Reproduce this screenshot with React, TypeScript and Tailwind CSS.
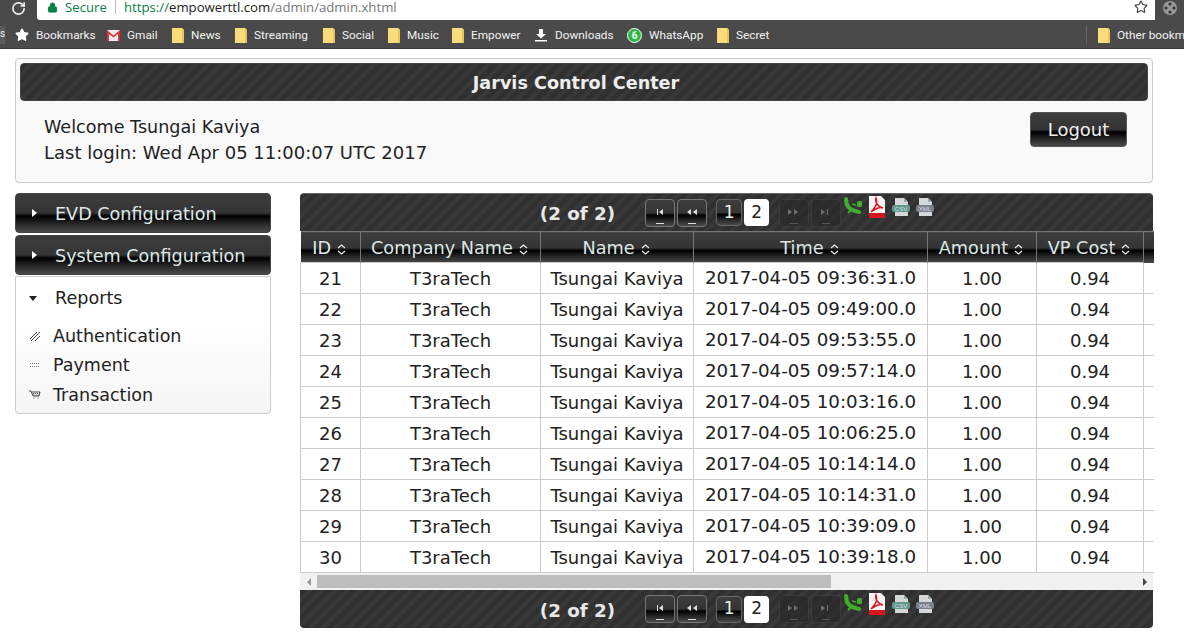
import { RotateCw, Lock, Star } from 'lucide-react';
import type { ReactNode } from 'react';

const STRIPES =
  'bg-[repeating-linear-gradient(135deg,#303030_0px,#303030_5px,#383838_5px,#383838_9px)]';
const GLOSS =
  'bg-[linear-gradient(#3d3d3d_0%,#343434_50%,#000000_58%,#262626_78%,#4a4a4a_100%)]';

const rows = [
  ['21', '2017-04-05 09:36:31.0'],
  ['22', '2017-04-05 09:49:00.0'],
  ['23', '2017-04-05 09:53:55.0'],
  ['24', '2017-04-05 09:57:14.0'],
  ['25', '2017-04-05 10:03:16.0'],
  ['26', '2017-04-05 10:06:25.0'],
  ['27', '2017-04-05 10:14:14.0'],
  ['28', '2017-04-05 10:14:31.0'],
  ['29', '2017-04-05 10:39:09.0'],
  ['30', '2017-04-05 10:39:18.0'],
];

const columns = ['ID', 'Company Name', 'Name', 'Time', 'Amount', 'VP Cost'];

function Folder() {
  return (
    <svg width="12" height="15" viewBox="0 0 12 15" className="shrink-0">
      <path d="M0 0h10l2 2v13H0z" fill="#fbdc7a" />
      <path d="M10 0l2 2v13h-2z" fill="#e8c25a" />
    </svg>
  );
}

function Mark({ icon, label, className }: { icon: ReactNode; label: string; className: string }) {
  return (
    <div className={`flex items-center gap-[7px] shrink-0 ${className}`}>
      {icon}
      <span>{label}</span>
    </div>
  );
}

function BrowserChrome() {
  return (
    <div className="font-['Open_Sans',sans-serif]">
      <div className="h-[20px] bg-[#4a4a4a] flex overflow-hidden">
        <div className="w-[37px] flex justify-center">
          <RotateCw size={15} color="#f0f0f0" strokeWidth={2.6} className="mt-[1px]" />
        </div>
        <div className="w-[1118px] h-[20px] bg-white rounded-bl-[3px] flex items-center text-[13.2px] leading-[14px] pl-[10px] pb-[6px] relative">
          <Lock size={11} color="#0b8043" fill="#0b8043" className="mr-[7px]" />
          <span className="text-[#0b8043] w-[50px]">Secure</span>
          <span className="w-px h-[14px] bg-[#bbb] mr-[8px]" />
          <span className="text-[#0b8043]">https://</span>
          <span className="text-[#222]">empowerttl.com</span>
          <span className="text-[#777]">/admin/admin.xhtml</span>
          <Star size={14} color="#444" className="absolute right-[7px] top-[0px]" />
        </div>
        <div className="flex-1 flex justify-center">
          <svg width="16" height="16" viewBox="0 0 16 16">
            <circle cx="8" cy="8" r="7" fill="#999" />
            <circle cx="8" cy="4" r="1.6" fill="#333" />
            <circle cx="4" cy="8" r="1.6" fill="#333" />
            <circle cx="12" cy="8" r="1.6" fill="#333" />
            <circle cx="8" cy="12" r="1.6" fill="#333" />
          </svg>
        </div>
      </div>
      <div className="h-[29px] bg-[#4a4a4a] border-b border-b-[#3a3a3a] flex items-center text-[11.8px] leading-[15px] text-[#f2f2f2] font-['Roboto',sans-serif] relative overflow-hidden pt-[2px]">
        <div className="w-[5px] h-[18px] bg-[#5a5a5a] shrink-0 mr-[10px] overflow-hidden text-[10px]">s</div>
        <Mark
          className="w-[92px]"
          icon={<Star size={14} color="#fff" fill="#fff" />}
          label="Bookmarks"
        />
        <Mark
          className="w-[65px]"
          icon={
            <svg width="13" height="11" viewBox="0 0 13 11">
              <rect width="13" height="11" fill="#eee" />
              <path d="M0 0l6.5 5.5L13 0v11h-2V4L6.5 7.5 2 4v7H0z" fill="#d33" />
            </svg>
          }
          label="Gmail"
        />
        <Mark className="w-[63px]" icon={<Folder />} label="News" />
        <Mark className="w-[88px]" icon={<Folder />} label="Streaming" />
        <Mark className="w-[65px]" icon={<Folder />} label="Social" />
        <Mark className="w-[64px]" icon={<Folder />} label="Music" />
        <Mark className="w-[82px]" icon={<Folder />} label="Empower" />
        <Mark
          className="w-[93px]"
          icon={
            <svg width="14" height="14" viewBox="0 0 14 14">
              <path d="M5 1h4v5h3L7 10.5 2 6h3zM1 12h12v1.5H1z" fill="#fff" />
            </svg>
          }
          label="Downloads"
        />
        <Mark
          className="w-[90px]"
          icon={
            <span className="w-[15px] h-[15px] rounded-full bg-[#2cb742] border border-white text-[10px] leading-[13px] text-center text-white font-bold">
              6
            </span>
          }
          label="WhatsApp"
        />
        <Mark className="w-[369px]" icon={<Folder />} label="Secret" />
        <span className="w-px h-[18px] bg-[#666] mr-[11px] shrink-0" />
        <Mark className="" icon={<Folder />} label="Other bookm" />
      </div>
    </div>
  );
}

function PagerButton({ kind, disabled }: { kind: 'first' | 'prev' | 'next' | 'last'; disabled?: boolean }) {
  const glyph = {
    first: 'M4 1v6h1V1zM10 1v6L6 4z',
    prev: 'M6 1v6L2 4zM12 1v6L8 4z',
    next: 'M1 1v6l4-3zM7 1v6l4-3z',
    last: 'M2 1v6l4-3zM8 1v6h1V1z',
  }[kind];
  return (
    <div
      className={`w-[30px] h-[28px] rounded-[4px] border flex flex-col items-center pt-[8px] ${
        disabled ? 'border-[#3f3f3f] bg-[#2a2a2a] opacity-70' : `border-[#777] ${GLOSS}`
      }`}
    >
      <svg width="14" height="8" viewBox="0 0 14 8">
        <path d={glyph} fill={disabled ? '#888' : '#ddd'} />
      </svg>
      <span className={`w-[8px] h-px mt-[7px] ${disabled ? 'bg-[#666]' : 'bg-[#ddd]'}`} />
    </div>
  );
}

function FileIcon({ label, tint }: { label: string; tint: string }) {
  return (
    <svg width="20" height="20" viewBox="0 0 20 20" className="shrink-0">
      <path d="M4 1h9l4 4v14H4z" fill="#d5d8d8" />
      <path d="M13 1l4 4h-4z" fill="#9aa" />
      <rect x="1" y="8" width="18" height="7" rx="2" fill={tint} />
      <text x="10" y="14" textAnchor="middle" fontSize="6" fill="#dde" fontFamily="Liberation Sans">
        {label}
      </text>
    </svg>
  );
}

function Paginator({ className }: { className: string }) {
  return (
    <div className={`h-[38px] ${STRIPES} flex items-center justify-center pl-[22px] ${className}`}>
      <span className="text-[18.3px] font-bold text-[#e8e8e8] mr-[30px] pt-[3px]">(2 of 2)</span>
      <div className="flex gap-[2px] mr-[9px]">
        <PagerButton kind="first" />
        <PagerButton kind="prev" />
      </div>
      <div className={`w-[26px] h-[27px] rounded-[4px] border border-[#666] ${GLOSS} flex items-center justify-center text-[#e6f0e6] text-[17px] mr-[2px]`}>
        1
      </div>
      <div className="w-[25px] h-[27px] rounded-[4px] bg-white flex items-center justify-center text-[#222] text-[17px] mr-[10px]">
        2
      </div>
      <div className="flex gap-[2px] mr-[2px]">
        <PagerButton kind="next" disabled />
        <PagerButton kind="last" disabled />
      </div>
      <div className="flex gap-[4px] -mt-[10px]">
        <svg width="20" height="20" viewBox="0 0 20 20" className="shrink-0">
          <path d="M3 2c0 7 3 11 13 13" fill="none" stroke="#3fae2a" strokeWidth="4" strokeLinecap="round" />
          <path d="M8 13l-3 3" stroke="#3fae2a" strokeWidth="2" fill="none" />
          <path d="M9 7l4 1" stroke="#3fae2a" strokeWidth="1.6" fill="none" />
          <rect x="14" y="4" width="5" height="6" rx="1.5" fill="#3fae2a" />
        </svg>
        <svg width="20" height="22" viewBox="0 0 20 22" className="shrink-0 -mt-[1px]">
          <path d="M2 0h12l4 4v18H2z" fill="#f4f4f4" />
          <rect x="2" y="17" width="16" height="5" fill="#d8151c" />
          <path
            d="M9 2c1 3 1 6-1 9s-4 5-4 5 4-3 7-4 5 0 5 0-4-1-6-4-1-6-1-6z"
            fill="none"
            stroke="#d8151c"
            strokeWidth="1.4"
          />
        </svg>
        <FileIcon label="CSV" tint="#5f9a8a" />
        <FileIcon label="XML" tint="#7c8088" />
      </div>
    </div>
  );
}

function SortIcon() {
  return (
    <svg width="9" height="11" viewBox="0 0 9 11" className="inline-block ml-[6px] align-[-1px]">
      <path d="M1 4l3.5-3L8 4M1 7l3.5 3L8 7" fill="none" stroke="#eee" strokeWidth="1.2" />
    </svg>
  );
}

function AccordionHead({ label, className }: { label: string; className: string }) {
  return (
    <div className={`h-[40px] rounded-[4px] border border-[#444] ${GLOSS} flex items-center text-[#dfe8e8] text-[17.6px]`}>
      <span className="ml-[16px] mr-[18px] w-0 h-0 border-y-[4px] border-y-transparent border-l-[5px] border-l-white" />
      <span className={className}>{label}</span>
    </div>
  );
}

function ReportItem({ icon, label }: { icon: ReactNode; label: string }) {
  return (
    <div className="h-[29.5px] flex items-center text-[17.5px] text-[#222]">
      <span className="w-[37px] pl-[13px] flex">{icon}</span>
      {label}
    </div>
  );
}

export default function App() {
  return (
    <div className="w-[1184px] h-[638px] bg-white overflow-hidden font-['DejaVu_Sans',sans-serif]">
      <BrowserChrome />

      <div className="px-[15px] pr-[31px] pt-[9px]">
        <div className="h-[125px] rounded-[4px] border border-[#ccc] bg-[#f9f9f9] p-[4px]">
          <div className={`h-[38px] rounded-[4px] border border-[#444] ${STRIPES} flex items-center justify-center pr-[16px] pt-[3px] text-[17.6px] font-bold text-[#eeeeee]`}>
            Jarvis Control Center
          </div>
          <div className="flex justify-between pl-[24px] pr-[21px] pt-[13px]">
            <div className="leading-[26px] text-[#222]">
              <div className="text-[17.6px]">Welcome Tsungai Kaviya</div>
              <div className="text-[18px]">Last login: Wed Apr 05 11:00:07 UTC 2017</div>
            </div>
            <button className={`w-[97px] h-[35px] -mt-[2px] rounded-[4px] border border-[#555] ${GLOSS} text-[18px] text-[#eeeeee]`}>
              Logout
            </button>
          </div>
        </div>

        <div className="flex mt-[10px] gap-[29px]">
          <div className="w-[256px] shrink-0 flex flex-col">
            <AccordionHead label="EVD Configuration" className="pt-[3px]" />
            <div className="h-[2px]" />
            <AccordionHead label="System Configuration" className="pt-[2px]" />
            <div className="h-[138px] mt-[1px] rounded-b-[4px] border border-[#ccc] bg-[linear-gradient(#ffffff_0%,#ffffff_30%,#f5f5f5_100%)]">
              <div className="h-[39px] flex items-center text-[17.6px] text-[#222] pt-[3px]">
                <span className="ml-[13px] mr-[18px] w-0 h-0 border-x-[4px] border-x-transparent border-t-[5px] border-t-[#222]" />
                Reports
              </div>
              <div className="pt-[5px]">
                <ReportItem
                  label="Authentication"
                  icon={
                    <svg width="12" height="12" viewBox="0 0 12 12">
                      <path d="M1 9l7-7M2 11l9-9M6 11l5-5" stroke="#444" strokeWidth="1" fill="none" />
                    </svg>
                  }
                />
                <ReportItem
                  label="Payment"
                  icon={
                    <svg width="12" height="6" viewBox="0 0 12 6">
                      <path d="M1 1.5h10M1 4.5h10" stroke="#777" strokeWidth="1" strokeDasharray="1 1" fill="none" />
                    </svg>
                  }
                />
                <ReportItem
                  label="Transaction"
                  icon={
                    <svg width="12" height="10" viewBox="0 0 12 10">
                      <path d="M0 1h2l2 5h6l1-4H3M4.5 8h1M8.5 8h1" stroke="#444" strokeWidth="1" fill="none" />
                      <path d="M4 3.5h6M4.5 5h5" stroke="#444" strokeWidth="1" strokeDasharray="1 1" fill="none" />
                    </svg>
                  }
                />
              </div>
            </div>
          </div>

          <div className="w-[853px] shrink-0">
            <Paginator className="rounded-t-[4px] border-t border-t-[#666]" />
            <table className="w-full table-fixed border-collapse">
              <colgroup>
                <col className="w-[60px]" />
                <col className="w-[180px]" />
                <col className="w-[153px]" />
                <col className="w-[234px]" />
                <col className="w-[109px]" />
                <col className="w-[107px]" />
                <col className="w-[10px]" />
              </colgroup>
              <thead>
                <tr className={`h-[31px] ${GLOSS} border-t border-t-[#777]`}>
                  {columns.map((c) => (
                    <th key={c} className="border-x border-x-[#777] first:border-l-0 font-normal text-[17.7px] text-[#dfe6e6] p-0 pt-[2px] pr-[2px] whitespace-nowrap">
                      {c}
                      <SortIcon />
                    </th>
                  ))}
                  <th className="border-l border-l-[#777] p-0" />
                </tr>
              </thead>
              <tbody>
                {rows.map(([id, time]) => (
                  <tr key={id} className="h-[31px] bg-white border-b border-b-[#ccc] text-[18px] text-[#222] text-center">
                    <td className="border border-[#ccc] p-0">{id}</td>
                    <td className="border border-[#ccc] p-0">T3raTech</td>
                    <td className="border border-[#ccc] p-0 whitespace-nowrap">Tsungai Kaviya</td>
                    <td className="border border-[#ccc] p-0 whitespace-nowrap text-[18.25px]">{time}</td>
                    <td className="border border-[#ccc] p-0">1.00</td>
                    <td className="border border-[#ccc] p-0">0.94</td>
                    <td className="border-l border-l-[#ccc] p-0" />
                  </tr>
                ))}
              </tbody>
            </table>
            <div className="h-[17px] bg-[#f1f1f1] flex items-center">
              <span className="w-[17px] flex justify-center">
                <span className="w-0 h-0 border-y-[4px] border-y-transparent border-r-[4px] border-r-[#999]" />
              </span>
              <div className="w-[514px] h-[13px] bg-[#bdbdbd]" />
              <div className="flex-1" />
              <span className="w-[17px] flex justify-center">
                <span className="w-0 h-0 border-y-[4px] border-y-transparent border-l-[4px] border-l-[#444]" />
              </span>
            </div>
            <Paginator className="rounded-b-[4px]" />
          </div>
        </div>
      </div>
    </div>
  );
}
